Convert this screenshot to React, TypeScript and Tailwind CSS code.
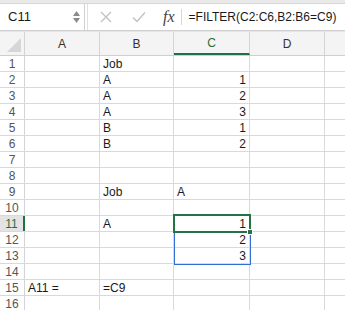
import React from 'react';

const cols = ['A', 'B', 'C', 'D'];
const colW = ['w-[75px]', 'w-[74px]', 'w-[76px]', 'w-[75px]'];

type Cell = { v: string; right?: boolean };
const data: Record<number, Record<string, Cell>> = {
  1: { B: { v: 'Job' } },
  2: { B: { v: 'A' }, C: { v: '1', right: true } },
  3: { B: { v: 'A' }, C: { v: '2', right: true } },
  4: { B: { v: 'A' }, C: { v: '3', right: true } },
  5: { B: { v: 'B' }, C: { v: '1', right: true } },
  6: { B: { v: 'B' }, C: { v: '2', right: true } },
  9: { B: { v: 'Job' }, C: { v: 'A' } },
  11: { B: { v: 'A' }, C: { v: '1', right: true } },
  12: { C: { v: '2', right: true } },
  13: { C: { v: '3', right: true } },
  15: { A: { v: 'A11 =' }, B: { v: '=C9' } },
};

const rows = Array.from({ length: 16 }, (_, i) => i + 1);

export default function App() {
  return (
    <div
      className="w-[345px] h-[310px] overflow-hidden bg-white text-[#1a1a1a] relative"
      style={{ fontFamily: '"Liberation Sans", Arial, sans-serif' }}
    >
      {/* top strip */}
      <div className="h-[4px] bg-[#e9e9e9] border-b border-[#d6d6d6]" />

      {/* formula bar */}
      <div className="h-[27px] flex items-center border-b border-[#d0d0d0] bg-white">
        <div className="w-[85px] h-full flex items-center border-r border-[#d0d0d0] pl-[8px] pr-[4px]">
          <span className="text-[13px] flex-1">C11</span>
          <div className="flex flex-col items-center gap-[2px] text-[#8a8a8a]">
            <svg width="7" height="5" viewBox="0 0 7 5"><path d="M0 5 L3.5 0 L7 5 Z" fill="currentColor" /></svg>
            <svg width="7" height="5" viewBox="0 0 7 5"><path d="M0 0 L3.5 5 L7 0 Z" fill="currentColor" /></svg>
          </div>
        </div>
        <div className="flex items-center h-full flex-1 ml-[2px] border-l border-[#e2e2e2]">
          <svg className="ml-[12px]" width="12" height="12" viewBox="0 0 12 12">
            <path d="M1 1 L11 11 M11 1 L1 11" stroke="#c2c2c2" strokeWidth="1.4" fill="none" />
          </svg>
          <svg className="ml-[20px]" width="14" height="12" viewBox="0 0 14 12">
            <path d="M1 6.5 L5 10.5 L13 1.5" stroke="#c2c2c2" strokeWidth="1.4" fill="none" />
          </svg>
          <span
            className="ml-[17px] text-[16px] italic text-[#444]"
            style={{ fontFamily: '"Liberation Serif", "Times New Roman", serif' }}
          >
            fx
          </span>
          <div className="ml-[6px] w-px h-[16px] bg-[#d6d6d6]" />
          <span className="ml-[7px] text-[12px] text-[#1a1a1a]">=FILTER(C2:C6,B2:B6=C9)</span>
        </div>
      </div>

      <div className="h-px bg-[#e6e6e6]" />

      {/* column headers */}
      <div className="flex h-[24px] bg-[#f4f4f4] border-b border-[#cfcfcf]">
        <div className="w-[25px] h-full border-r border-[#d4d4d4] relative">
          <svg className="absolute right-[3px] bottom-[3px]" width="14" height="14" viewBox="0 0 14 14">
            <path d="M14 0 L14 14 L0 14 Z" fill="#d6d6d6" />
          </svg>
        </div>
        {cols.map((c, i) => (
          <div
            key={c}
            className={`${colW[i]} h-full border-r border-[#d4d4d4] flex items-center justify-center text-[12px] ${
              c === 'C' ? 'text-[#1e7145] border-b-2 border-b-[#1e7145]' : 'text-[#333]'
            }`}
          >
            {c}
          </div>
        ))}
        <div className="flex-1" />
      </div>

      {/* rows */}
      {rows.map((r) => (
        <div key={r} className="flex h-[16px] border-b border-[#d9d9d9]">
          <div
            className={`w-[25px] h-full border-r flex items-center justify-center text-[12px] ${
              r === 11
                ? 'bg-[#e3e3e3] text-[#1e7145] border-r-2 border-r-[#1e7145]'
                : 'text-[#555] border-[#d4d4d4]'
            }`}
          >
            {r}
          </div>
          {cols.map((c, i) => {
            const cell = data[r]?.[c];
            return (
              <div
                key={c}
                className={`${colW[i]} h-full border-r border-[#d9d9d9] flex items-center px-[3px] text-[12px] ${
                  cell?.right ? 'justify-end' : 'justify-start'
                }`}
              >
                {cell?.v}
              </div>
            );
          })}
          <div className="flex-1" />
        </div>
      ))}

      {/* spill range outline */}
      <div className="absolute left-[174px] top-[215px] w-[77px] h-[50px] border border-[#2f6fd1] pointer-events-none" />
      {/* active cell */}
      <div className="absolute left-[173px] top-[214px] w-[78px] h-[19px] border-2 border-[#237346] pointer-events-none" />
      <div className="absolute left-[247px] top-[229px] w-[6px] h-[6px] bg-[#237346] border border-white pointer-events-none" />
    </div>
  );
}
